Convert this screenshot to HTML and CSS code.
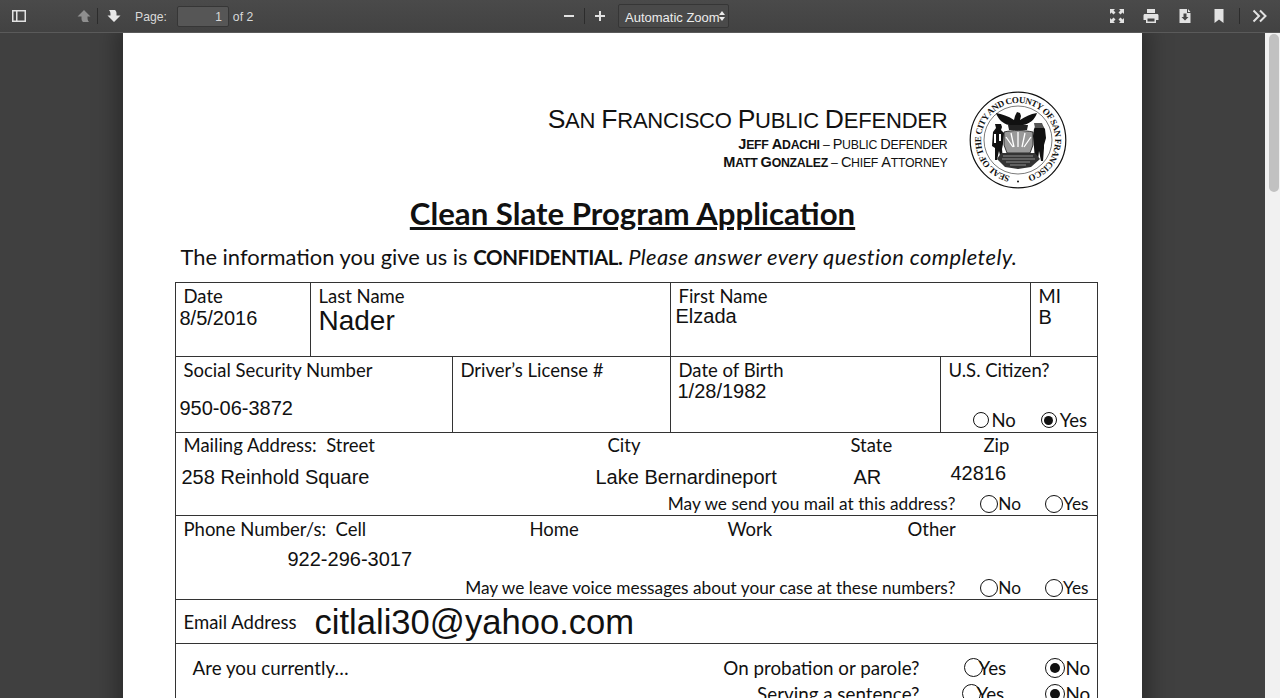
FILE: index.html
```html
<!DOCTYPE html>
<html lang="en">
<head>
    <meta charset="UTF-8">
    <title>Clean Slate Program Application</title>
    <link rel="stylesheet" href="styles.css">
</head>
<body>
    <div class="toolbar">
        <div class="tool-group left-tools">
            <svg class="icon sidebar-icon" viewBox="0 0 14 14"><path fill="#e2e2e2" fill-rule="evenodd" d="M0 1h14v12H0zM1.500 2.500v9H4v-9zM5.500 2.500v9h7v-9z"/></svg>
            <svg class="icon prev-icon" viewBox="0 0 14 14"><path fill="#8f8f8f" d="M7 1l6.500 6.500H10.500c0 2 0 4 1.500 5.500H6c-1-.8-1.500-2-1.500-3.500v-2H.5z"/></svg>
            <span class="divider"></span>
            <svg class="icon next-icon" viewBox="0 0 14 14"><path fill="#e8e8e8" d="M7 13L.5 6.500h3c0-2 0-4-1.500-5.500h6c1 .8 1.500 2 1.500 3.500v2h4z"/></svg>
            <span class="tool-label page-label">Page:</span>
            <span class="page-input">1</span>
            <span class="tool-label">of 2</span>
        </div>
        <div class="tool-group zoom-tools">
            <svg class="icon zoom-icon" viewBox="0 0 12 12"><path fill="#e2e2e2" d="M1 5h10v2H1z"/></svg>
            <span class="divider"></span>
            <svg class="icon zoom-icon" viewBox="0 0 12 12"><path fill="#e2e2e2" d="M5 1h2v4h4v2H7v4H5V7H1V5h4z"/></svg>
            <div class="zoom-select">
                <span class="zoom-text">Automatic Zoom</span>
                <svg class="select-arrows" viewBox="0 0 6 10"><path fill="#ececec" d="M3 0l3 4H0zM3 10L0 6h6z"/></svg>
            </div>
        </div>
        <div class="tool-group right-tools">
            <svg class="icon" viewBox="0 0 16 16"><path fill="#e2e2e2" d="M1 1h5L4.500 2.500 6.500 4.500 4.500 6.500 2.500 4.500 1 6zM15 1v5l-1.500-1.500-2 2-2-2 2-2L10 1zM1 15v-5l1.500 1.500 2-2 2 2-2 2L6 15zM15 15h-5l1.500-1.500-2-2 2-2 2 2L15 10z"/></svg>
            <svg class="icon" viewBox="0 0 16 16"><path fill="#e2e2e2" fill-rule="evenodd" d="M4 1h8v4H4zM2 6h12c1 0 1.500.6 1.500 1.500V12H13v3H3v-3H.5V7.500C.5 6.600 1 6 2 6zM4.500 10.500V13.500h7v-3z"/></svg>
            <svg class="icon" viewBox="0 0 16 16"><path fill="#e2e2e2" fill-rule="evenodd" d="M2.500 1H10v4h3.500v10h-11zM11 1l2.500 3H11zM6.500 5.500v3.500H4.500L8 12.500l3.500-3.500h-2V5.500z"/></svg>
            <svg class="icon" viewBox="0 0 16 16"><path fill="#e2e2e2" d="M3.500 1h9v14L8 11.500 3.500 15z"/></svg>
            <span class="divider"></span>
            <svg class="icon" viewBox="0 0 16 16"><path fill="none" stroke="#e2e2e2" stroke-width="2" d="M1.500 2.500L7 8l-5.500 5.500M8 2.500L13.500 8 8 13.500"/></svg>
        </div>
    </div>

    <div class="viewer">
        <div class="viewer-main">
            <div class="page">
                <div class="letterhead">
                    <div class="office">
                        <div class="office-name"><span class="cap">S</span>an <span class="cap">F</span>rancisco <span class="cap">P</span>ublic <span class="cap">D</span>efender</div>
                        <div class="office-line"><b><span class="cap">J</span>eff <span class="cap">A</span>dachi</b> – <span class="cap">P</span>ublic <span class="cap">D</span>efender</div>
                        <div class="office-line"><b><span class="cap">M</span>att <span class="cap">G</span>onzalez</b> – <span class="cap">C</span>hief <span class="cap">A</span>ttorney</div>
                    </div>
                    <svg class="seal" viewBox="0 0 98 98">
                        <defs>
                            <path id="sealArc" d="M49 86A37 37 0 1 1 49.100 86"/>
                        </defs>
                        <circle cx="49" cy="49" r="47.800" fill="none" stroke="#111" stroke-width="1.200"/>
                        <circle cx="49" cy="49" r="34" fill="none" stroke="#222" stroke-width="0.600"/>
                        <text class="seal-text"><textPath href="#sealArc" startOffset="8" textLength="214" lengthAdjust="spacing">SEAL OF THE CITY AND COUNTY OF SAN FRANCISCO</textPath></text>
                        <circle cx="49" cy="90.500" r="1" fill="#111"/>
                        <!-- eagle and crown -->
                        <path fill="#111" d="M27 22c6 1 12 3 18 7l1-4 2-4 3 1 1 3-1 4c5-3 10-6 17-7-2 6-7 11-14 12l-3 3h-8l-3-3c-6-1-11-6-13-12z"/>
                        <path fill="#222" d="M39 34h20l-1 5H40z"/>
                        <!-- shield with rays -->
                        <path fill="#999" d="M35 41c8-2 20-2 29 0v13l-3 8H38l-3-8z"/>
                        <path stroke="#fff" stroke-width="1.300" d="M42 42l3 14M49 41v15M56 42l-3 14M37 46l7 10M62 46l-7 10"/>
                        <path fill="none" stroke="#111" stroke-width="0.800" d="M35 41c8-2 20-2 29 0v13l-3 8H38l-3-8z"/>
                        <!-- miner -->
                        <path fill="#111" d="M26 33h6l1 3-1 3 3 3-1 11-1 5 1 11h-2l-2-9-2 9h-2l0-12-3-2 1-14 3-4z"/>
                        <path fill="#fff" d="M25 43h2v9h-2zM30 43h2v7h-2z"/>
                        <!-- sailor -->
                        <path fill="#111" d="M67 34h6l3 4 1 9-2 7v3l-1 13h-2l-2-10-1 10h-3l-1-14-1-11 1-7z"/>
                        <path fill="#555" d="M65 32h8l2 5h-9z"/>
                        <!-- ship and hills -->
                        <path fill="#333" d="M32 62h34l5 6-9 8-13 2-13-2-8-8z"/>
                        <path stroke="#ccc" stroke-width="0.600" d="M34 65h30M33 68h33M37 71h24M41 74h16"/>
                    </svg>
                </div>

                <h1 class="form-title">Clean Slate Program Application</h1>
                <p class="form-intro">The information you give us is <b>CONFIDENTIAL.</b> <i>Please answer every question completely.</i></p>

                <div class="form-table">
                    <div class="form-row row-name">
                        <div class="cell cell-date">
                            <div class="label">Date</div>
                            <div class="value value-date">8/5/2016</div>
                        </div>
                        <div class="cell cell-last">
                            <div class="label">Last Name</div>
                            <div class="value value-last">Nader</div>
                        </div>
                        <div class="cell cell-first">
                            <div class="label">First Name</div>
                            <div class="value value-first">Elzada</div>
                        </div>
                        <div class="cell cell-mi">
                            <div class="label">MI</div>
                            <div class="value value-mi">B</div>
                        </div>
                    </div>

                    <div class="form-row row-ids">
                        <div class="cell cell-ssn">
                            <div class="label">Social Security Number</div>
                            <div class="value value-ssn">950-06-3872</div>
                        </div>
                        <div class="cell cell-license">
                            <div class="label">Driver’s License #</div>
                        </div>
                        <div class="cell cell-dob">
                            <div class="label">Date of Birth</div>
                            <div class="value value-dob">1/28/1982</div>
                        </div>
                        <div class="cell cell-citizen">
                            <div class="label">U.S. Citizen?</div>
                            <div class="citizen-options">
                                <span class="option"><span class="radio small"></span>No</span>
                                <span class="option"><span class="radio small checked"></span>Yes</span>
                            </div>
                        </div>
                    </div>

                    <div class="form-row row-address">
                        <div class="line address-labels">
                            <span>Mailing Address:&nbsp; Street</span><span>City</span><span>State</span><span>Zip</span>
                        </div>
                        <div class="line address-values">
                            <span class="value">258 Reinhold Square</span><span class="value">Lake Bernardineport</span><span class="value">AR</span><span class="value value-zip">42816</span>
                        </div>
                        <div class="line question">
                            <span class="question-text">May we send you mail at this address?</span>
                            <span class="option option-no"><span class="radio"></span>No</span>
                            <span class="option"><span class="radio"></span>Yes</span>
                        </div>
                    </div>

                    <div class="form-row row-phone">
                        <div class="line phone-labels">
                            <span>Phone Number/s:&nbsp; Cell</span><span>Home</span><span>Work</span><span>Other</span>
                        </div>
                        <div class="line phone-values">
                            <span class="value">922-296-3017</span>
                        </div>
                        <div class="line question">
                            <span class="question-text">May we leave voice messages about your case at these numbers?</span>
                            <span class="option option-no"><span class="radio"></span>No</span>
                            <span class="option"><span class="radio"></span>Yes</span>
                        </div>
                    </div>

                    <div class="form-row row-email">
                        <span class="label">Email Address</span>
                        <span class="value value-email">citlali30@yahoo.com</span>
                    </div>

                    <div class="form-row row-status">
                        <div class="status-line">
                            <span class="status-lead">Are you currently…</span>
                            <span class="status-question">On probation or parole?</span>
                            <span class="option option-yes"><span class="radio"></span>Yes</span>
                            <span class="option option-done"><span class="radio checked"></span>No</span>
                        </div>
                        <div class="status-line line-serving">
                            <span class="status-lead"></span>
                            <span class="status-question">Serving a sentence?</span>
                            <span class="option option-yes"><span class="radio"></span>Yes</span>
                            <span class="option option-done"><span class="radio checked"></span>No</span>
                        </div>
                    </div>
                </div>
            </div>
        </div>
        <div class="scrollbar"><div class="scroll-thumb"></div></div>
    </div>
</body>
</html>
```

FILE: styles.css
```css
:root {
    --toolbar-bg: #474747;
    --viewer-bg: #404040;
    --tool-text: #d9d9d9;
    --ink: #111;
    --rule: #333;
}

html, body {
    margin: 0;
    padding: 0;
    height: 698px;
    overflow: hidden;
}

body {
    background: var(--viewer-bg);
    font-family: "Lato", sans-serif;
    display: flex;
    flex-direction: column;
}

/* toolbar */
.toolbar {
    height: 32px;
    flex: none;
    background: linear-gradient(#4a4a4a, #424242);
    box-shadow: 0 1px 0 #5a5a5a;
    display: flex;
    align-items: center;
    position: relative;
    z-index: 2;
    font-family: "Liberation Sans", sans-serif;
    font-size: 12.200px;
    color: var(--tool-text);
}

.tool-group {
    display: flex;
    align-items: center;
    height: 32px;
}

.icon {
    width: 16px;
    height: 16px;
    flex: none;
}

.divider {
    width: 1px;
    height: 16px;
    background: #2c2c2c;
    flex: none;
}

.left-tools {
    width: 563px;
    padding-left: 12px;
    box-sizing: border-box;
}

.tool-label {
    padding-top: 1px;
}

.sidebar-icon {
    width: 14px;
    height: 14px;
    margin-right: 51px;
}

.prev-icon {
    width: 14px;
    height: 14px;
    margin-right: 6px;
}

.next-icon {
    width: 14px;
    height: 14px;
    margin-left: 9px;
}

.page-label {
    margin-left: 14px;
}

.page-input {
    width: 52px;
    height: 21px;
    margin: 0 4px 0 10px;
    padding-right: 6px;
    box-sizing: border-box;
    background: #565656;
    border: 1px solid #363636;
    border-radius: 2px;
    text-align: right;
    line-height: 20px;
    font-size: 12px;
}

.zoom-tools {
    width: 166px;
}

.zoom-icon {
    width: 12px;
    height: 12px;
}

.zoom-tools .divider {
    margin: 0 9px;
}

.zoom-select {
    width: 111px;
    height: 24px;
    margin-left: 12px;
    padding-left: 6px;
    box-sizing: border-box;
    background: #4a4a4a;
    border: 1px solid #363636;
    border-radius: 2px;
    white-space: nowrap;
    overflow: hidden;
    color: #ececec;
    font-size: 13px;
    display: flex;
    align-items: center;
}

.zoom-text {
    padding-top: 2px;
}

.select-arrows {
    width: 6px;
    height: 10px;
    margin-left: -1px;
    flex: none;
}

.right-tools {
    flex: 1;
    justify-content: flex-end;
    gap: 18px;
    padding-right: 12px;
}

.right-tools .divider {
    margin: 0 -6px;
}

/* viewer */
.viewer {
    flex: 1;
    display: flex;
    overflow: hidden;
}

.viewer-main {
    flex: 1;
    overflow: hidden;
    padding-right: 1px;
}

.scrollbar {
    width: 15px;
    flex: none;
    background: #f1f1f1;
    box-sizing: border-box;
    padding: 2px 1px 0 4px;
}

.scroll-thumb {
    height: 158px;
    background: #c1c1c1;
    border-radius: 5px;
}

.page {
    width: 923px;
    margin: 0 auto;
    padding: 0 44px 0 52px;
    background: #fff;
    color: var(--ink);
    height: 900px;
    box-shadow: 0 0 22px 6px rgba(0, 0, 0, 0.35);
}

/* letterhead */
.letterhead {
    display: flex;
    justify-content: flex-end;
    padding-top: 59px;
    margin-right: 31px;
}

.office {
    font-family: "Liberation Sans", sans-serif;
    text-transform: uppercase;
    text-align: right;
    margin-top: 13px;
}

.office-name {
    font-size: 22px;
    line-height: 30px;
    letter-spacing: -0.2px;
}

.office-name .cap {
    font-size: 26.500px;
}

.office-line {
    font-size: 12.300px;
    line-height: 17px;
    letter-spacing: -0.25px;
}

.office-line .cap {
    font-size: 14.500px;
}

.seal {
    width: 98px;
    height: 98px;
    margin-left: 21px;
    flex: none;
}

.seal-text {
    font-family: "Liberation Serif", serif;
    font-weight: bold;
    font-size: 9px;
    fill: var(--ink);
}

.form-title {
    margin: 5px 0 0;
    padding-right: 7px;
    font-size: 31.200px;
    line-height: 38px;
    font-weight: 700;
    text-align: center;
    text-decoration: underline;
}

.form-intro {
    margin: 12px 0 0;
    padding-left: 6px;
    font-size: 21.900px;
    line-height: 26px;
    white-space: nowrap;
}

.form-intro b {
    font-size: 20.500px;
    letter-spacing: -0.4px;
}

.form-intro i {
    letter-spacing: 0.42px;
}

/* form table */
.form-table {
    margin-top: 12px;
    border: solid var(--rule);
    border-width: 1px 1px 0 1px;
    font-size: 18.500px;
}

.form-row {
    border-bottom: 1px solid var(--rule);
    box-sizing: border-box;
}

.row-name,
.row-ids {
    display: flex;
}

.row-name {
    height: 74px;
}

.row-ids {
    height: 76px;
}

.cell {
    box-sizing: border-box;
    padding: 2px 0 0 8px;
    border-right: 1px solid var(--rule);
    line-height: 22px;
}

.cell:last-child {
    border-right: none;
    flex: 1;
}

.label {
    line-height: 22px;
}

.value {
    font-family: "Liberation Sans", sans-serif;
    font-size: 20px;
}

.cell-date { width: 135px; }
.cell-last { width: 360px; }
.cell-first { width: 360px; }
.cell-ssn { width: 277px; }
.cell-license { width: 218px; }
.cell-dob { width: 270px; }

.value-date { margin-left: -4px; line-height: 22px; }
.value-last { font-size: 28px; line-height: 28px; }
.value-first { margin-left: -3px; line-height: 18px; }
.value-mi { line-height: 21px; }
.value-ssn { margin: 16px 0 0 -4px; }
.value-dob { margin-left: -1px; line-height: 20px; }

.citizen-options {
    display: flex;
    margin: 28px 0 0 24px;
    gap: 25px;
}

.option {
    display: flex;
    align-items: center;
    gap: 3px;
    line-height: 22px;
}

.radio {
    width: 18px;
    height: 18px;
    box-sizing: border-box;
    border: 1.5px solid var(--ink);
    border-radius: 50%;
    flex: none;
    display: inline-flex;
    align-items: center;
    justify-content: center;
}

.radio.small {
    width: 16px;
    height: 16px;
}

.radio.checked::after {
    content: "";
    width: 10px;
    height: 10px;
    border-radius: 50%;
    background: var(--ink);
}

.radio.small.checked::after {
    width: 9px;
    height: 9px;
}

.row-address {
    height: 83px;
    padding-top: 1px;
}

.row-phone {
    height: 84px;
    padding-top: 2px;
}

.line {
    display: flex;
    line-height: 22px;
}

.address-labels,
.address-values,
.phone-labels {
    padding-left: 8px;
}

.address-labels span:nth-child(1) { width: 424px; }
.address-labels span:nth-child(2) { width: 243px; }
.address-labels span:nth-child(3) { width: 133px; }

.address-values { margin-top: 10px; padding-left: 6px; }
.address-values span:nth-child(1) { width: 414px; }
.address-values span:nth-child(2) { width: 258px; }
.address-values span:nth-child(3) { width: 97px; }
.value-zip { margin-top: -4px; }

.phone-labels span:nth-child(1) { width: 346px; }
.phone-labels span:nth-child(2) { width: 198px; }
.phone-labels span:nth-child(3) { width: 180px; }

.phone-values {
    margin-top: 8px;
    padding-left: 112px;
}

.question {
    margin-top: 5px;
    justify-content: flex-end;
    font-size: 17.250px;
    padding-right: 8px;
}

.row-phone .question {
    margin-top: 7px;
}

.question-text {
    margin-right: 25px;
}

.option-no {
    margin-right: 24px;
}

.question .option {
    gap: 0;
}

.row-email {
    height: 44px;
    display: flex;
    align-items: center;
    padding-left: 8px;
}

.row-email .label {
    font-size: 18.500px;
    width: 131px;
}

.value-email {
    font-size: 34.600px;
    line-height: 44px;
}

.row-status {
    padding-top: 11px;
    border-bottom: none;
    font-size: 18.800px;
}

.status-line {
    display: flex;
    line-height: 25px;
    align-items: center;
}

.status-lead {
    width: 300px;
    padding-left: 17px;
    box-sizing: border-box;
    white-space: nowrap;
}

.status-question {
    width: 444px;
    text-align: right;
}

.option-yes {
    margin-left: 44px;
    width: 81px;
    gap: 0;
}

.option-yes .radio {
    width: 19px;
    height: 19px;
    margin-right: -4px;
}

.option-done {
    gap: 1px;
}

.option-done .radio {
    width: 20px;
    height: 20px;
}

.line-serving {
    margin-top: 1px;
}

.line-serving .option-yes {
    margin-left: 42px;
    width: 83px;
}
```
